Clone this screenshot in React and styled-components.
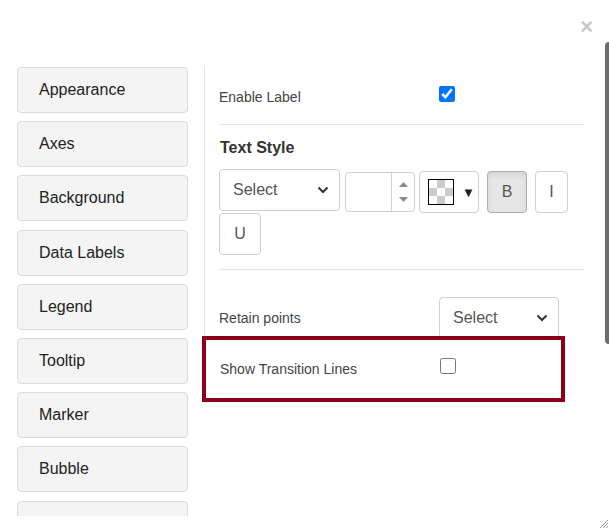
import React from "react";
import styled, { createGlobalStyle } from "styled-components";

const GlobalStyle = createGlobalStyle`
  html, body {
    margin: 0;
    padding: 0;
    background: #fff;
    overflow: hidden;
  }
  body {
    font-family: "Liberation Sans", Arial, sans-serif;
  }
`;

const Modal = styled.div`
  position: relative;
  width: 609px;
  height: 516px;
  overflow: hidden;
  background: #fff;
`;

const CloseButton = styled.span`
  position: absolute;
  top: 16px;
  right: 16px;
  font-size: 22px;
  line-height: 22px;
  font-weight: bold;
  color: #c8c8c8;
  cursor: pointer;
`;

const ScrollThumb = styled.div`
  position: absolute;
  top: 42px;
  right: 0;
  width: 4px;
  height: 302px;
  background: #6b6b6b;
  border-radius: 4px 0 0 4px;
`;

const ResizeGrip = styled.svg`
  position: fixed;
  right: 0;
  bottom: 0;
`;

const Body = styled.div`
  display: flex;
  align-items: flex-start;
  padding: 66px 0 0 17px;
`;

const Sidebar = styled.nav`
  display: flex;
  flex-direction: column;
  gap: 8.2px;
  width: 171px;
  margin-top: 1px;
  margin-right: 16px;
  flex-shrink: 0;
`;

const NavButton = styled.div`
  box-sizing: border-box;
  height: 46px;
  display: flex;
  align-items: center;
  padding-left: 21px;
  background: #f4f4f4;
  border: 1px solid #dcdcdc;
  border-radius: 4px;
  font-size: 16px;
  color: #222;
`;

const Panel = styled.div`
  width: 365px;
  padding-left: 14px;
  border-left: 1px solid #e6e6e6;
`;

const Row = styled.div`
  display: flex;
  align-items: ${(p) => (p.$center ? "center" : "flex-start")};
  padding: ${(p) => p.$pad || "0"};
  border-bottom: ${(p) => (p.$divider ? "1px solid #e6e6e6" : "none")};
`;

const HighlightRow = styled(Row)`
  width: 355px;
  height: 58px;
  box-sizing: border-box;
  margin-left: -13px;
  outline: 4px solid #8a0018;
`;

const Label = styled.div`
  width: 220px;
  flex-shrink: 0;
  font-size: 14px;
  line-height: 20px;
  color: #444;
  padding-top: ${(p) => p.$top || 0}px;
`;

const Check = styled.input`
  width: 16px;
  height: 16px;
  margin: 0;
  accent-color: #0075ff;
`;

const Heading = styled.div`
  margin: 13px 0 11px 1px;
  font-size: 16px;
  line-height: 20px;
  font-weight: bold;
  color: #333;
`;

const Toolbar = styled.div`
  display: flex;
  flex-wrap: wrap;
  align-items: flex-start;
  column-gap: 4px;
  padding-bottom: 14px;
  border-bottom: 1px solid #e6e6e6;
`;

const SelectBox = styled.div`
  box-sizing: border-box;
  width: ${(p) => p.$width}px;
  height: 42px;
  display: flex;
  align-items: center;
  justify-content: space-between;
  padding: 0 10px 0 13px;
  border: 1px solid #cfcfcf;
  border-radius: 4px;
  background: #fff;
  font-size: 16px;
  color: #555;
`;

const NumberBox = styled.div`
  box-sizing: border-box;
  width: 70px;
  height: 40px;
  margin: 3px 0 0 1px;
  display: flex;
  border: 1px solid #cfcfcf;
  border-radius: 4px;
  overflow: hidden;
`;

const NumberField = styled.div`
  flex: 1;
`;

const Spinner = styled.div`
  width: 22px;
  border-left: 1px solid #cfcfcf;
  display: flex;
  flex-direction: column;
  align-items: center;
  justify-content: space-around;
  padding: 4px 0;
`;

const ColorBox = styled.div`
  box-sizing: border-box;
  width: 60px;
  height: 42px;
  margin-top: 2px;
  display: flex;
  align-items: center;
  gap: 8px;
  padding-left: 8px;
  border: 1px solid #cfcfcf;
  border-radius: 4px;
  font-size: 13px;
  color: #222;
`;

const Swatch = styled.div`
  box-sizing: border-box;
  width: 26px;
  height: 26px;
  border: 1px solid #000;
  background: repeating-conic-gradient(#ccc 0 25%, #fff 0 50%) 0 0 / 16px 16px;
`;

const ToggleButton = styled.div`
  box-sizing: border-box;
  width: ${(p) => p.$width}px;
  height: 42px;
  margin-top: ${(p) => (p.$wrapped ? 0 : 2)}px;
  margin-left: ${(p) => p.$shift || 0}px;
  display: flex;
  align-items: center;
  justify-content: center;
  border: 1px solid ${(p) => (p.$active ? "#adadad" : "#cfcfcf")};
  border-radius: 4px;
  background: ${(p) => (p.$active ? "#e6e6e6" : "#fff")};
  box-shadow: ${(p) => (p.$active ? "inset 0 3px 5px rgba(0,0,0,0.08)" : "none")};
  font-size: 16px;
  color: #555;
`;

const Chevron = () => (
  <svg width="12" height="8" viewBox="0 0 12 8">
    <polyline points="1.5,1.5 6,6 10.5,1.5" fill="none" stroke="#333" strokeWidth="2" />
  </svg>
);

const Arrow = ({ up }) => (
  <svg width="9" height="5" viewBox="0 0 9 5">
    <polygon points={up ? "0,5 4.5,0 9,5" : "0,0 9,0 4.5,5"} fill="#8a8a8a" />
  </svg>
);

const navItems = [
  "Appearance",
  "Axes",
  "Background",
  "Data Labels",
  "Legend",
  "Tooltip",
  "Marker",
  "Bubble",
  "",
];

export default function App() {
  return (
    <>
      <GlobalStyle />
      <Modal>
        <CloseButton>×</CloseButton>
        <ScrollThumb />
        <Body>
          <Sidebar>
            {navItems.map((item, i) => (
              <NavButton key={i}>{item}</NavButton>
            ))}
          </Sidebar>
          <Panel>
            <Row $pad="20px 0 17px" $divider>
              <Label $top={1}>Enable Label</Label>
              <Check type="checkbox" defaultChecked />
            </Row>
            <Heading>Text Style</Heading>
            <Toolbar>
              <SelectBox $width={121}>
                <span>Select</span>
                <Chevron />
              </SelectBox>
              <NumberBox>
                <NumberField />
                <Spinner>
                  <Arrow up />
                  <Arrow />
                </Spinner>
              </NumberBox>
              <ColorBox>
                <Swatch />
                <span>▼</span>
              </ColorBox>
              <ToggleButton $width={40} $shift={4} $active>
                B
              </ToggleButton>
              <ToggleButton $width={33} $shift={4}>
                I
              </ToggleButton>
              <ToggleButton $width={42} $wrapped>
                U
              </ToggleButton>
            </Toolbar>
            <Row $center $pad="27px 0 1px">
              <Label>Retain points</Label>
              <SelectBox $width={120}>
                <span>Select</span>
                <Chevron />
              </SelectBox>
            </Row>
            <HighlightRow $pad="18px 0 0 14px">
              <Label $top={1}>Show Transition Lines</Label>
              <Check type="checkbox" />
            </HighlightRow>
          </Panel>
        </Body>
      </Modal>
      <ResizeGrip width="12" height="12" viewBox="0 0 12 12">
        <line x1="11" y1="3" x2="3" y2="11" stroke="#999" strokeWidth="1" />
        <line x1="11" y1="6" x2="6" y2="11" stroke="#999" strokeWidth="1" />
        <line x1="11" y1="9" x2="9" y2="11" stroke="#999" strokeWidth="1" />
      </ResizeGrip>
    </>
  );
}
